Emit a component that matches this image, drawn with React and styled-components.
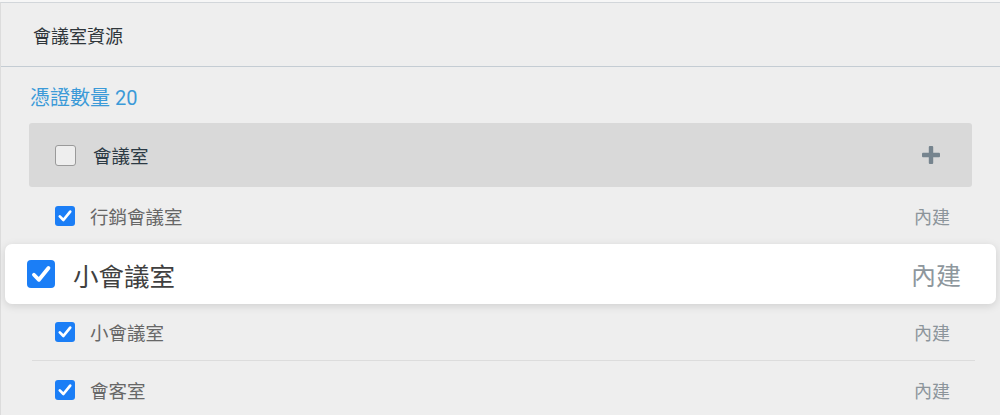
import React from 'react'
import styled, { createGlobalStyle } from 'styled-components'

const GlobalStyle = createGlobalStyle`
  html, body {
    margin: 0;
    padding: 0;
    background: #f6f6f6;
  }
  body {
    font-family: Roboto, "Noto Sans CJK TC", "Noto Sans", sans-serif;
  }
`

const Page = styled.div`
  width: 1000px;
  height: 415px;
  padding-top: 2px;
  box-sizing: border-box;
  overflow: hidden;
`

const Panel = styled.div`
  background: #eeeeee;
  border-top: 1px solid #d2d6da;
  border-left: 1px solid #dcdcdc;
  height: 100%;
`

const Header = styled.div`
  height: 63px;
  display: flex;
  align-items: center;
  padding-left: 32px;
  border-bottom: 1.5px solid #c4ccd3;
  font-size: 18px;
  color: #2f363b;
`

const Body = styled.div`
  padding: 20px 28px 0 28px;
`

const Count = styled.div`
  font-size: 20px;
  line-height: 22px;
  color: #3b9ad8;
  margin-left: 1px;
  margin-bottom: 14px;
`

const Group = styled.div`
  height: 64px;
  display: flex;
  align-items: center;
  gap: 17px;
  padding: 0 32px 0 26px;
  background: #d9d9d9;
  border-radius: 3px;
`

const GroupName = styled.span`
  flex: 1;
  font-size: 18.5px;
  color: #2c3a44;
`

const Box = styled.span`
  flex: 0 0 auto;
  width: ${p => p.size}px;
  height: ${p => p.size}px;
  box-sizing: border-box;
  border-radius: ${p => (p.size > 24 ? 4 : 3)}px;
  display: flex;
  align-items: center;
  justify-content: center;
  background: ${p => (p.checked ? '#1b7ef6' : '#eeeeee')};
  border: ${p => (p.checked ? 'none' : '1.5px solid #9a9a9a')};
`

const List = styled.div`
  position: relative;
  margin: 0 -3px 0 3px;
`

const Row = styled.div`
  height: 57px;
  display: flex;
  align-items: center;
  gap: 15px;
  padding: 0 25px 0 23px;
  border-bottom: 1px solid #dcdcdc;
  visibility: ${p => (p.placeholder ? 'hidden' : 'visible')};
`

const Name = styled.span`
  flex: 1;
  font-size: 18.5px;
  color: #676767;
`

const Tag = styled.span`
  font-size: 18px;
  color: #8c959b;
`

const DragCard = styled.div`
  position: absolute;
  top: 57px;
  left: -27px;
  right: -21px;
  height: 60px;
  display: flex;
  align-items: center;
  gap: 18px;
  padding: 0 35px 0 22px;
  background: #ffffff;
  border-radius: 7px;
  box-shadow: 0 2px 8px rgba(0, 0, 0, 0.13);
`

const DragName = styled.span`
  flex: 1;
  font-size: 25.5px;
  color: #404040;
`

const DragTag = styled.span`
  font-size: 25px;
  color: #8e979d;
`

const Check = ({ size, checked }) => (
  <Box size={size} checked={checked}>
    {checked && (
      <svg width={size * 0.8} height={size * 0.8} viewBox="0 0 20 20">
        <polyline
          points="3.5,10.5 8,15 16.5,4.5"
          fill="none"
          stroke="#fff"
          strokeWidth="3.4"
          strokeLinecap="round"
          strokeLinejoin="round"
        />
      </svg>
    )}
  </Box>
)

const Plus = () => (
  <svg width="18" height="18" viewBox="0 0 18 18">
    <rect x="6.8" y="0" width="4.4" height="18" rx="1" fill="#76848e" />
    <rect x="0" y="6.8" width="18" height="4.4" rx="1" fill="#76848e" />
  </svg>
)

const rooms = [
  { name: '行銷會議室' },
  { name: '小會議室', placeholder: true },
  { name: '小會議室' },
  { name: '會客室' },
]

export default function App() {
  return (
    <Page>
      <GlobalStyle />
      <Panel>
        <Header>會議室資源</Header>
        <Body>
          <Count>憑證數量 20</Count>
          <Group>
            <Check size={21} />
            <GroupName>會議室</GroupName>
            <Plus />
          </Group>
          <List>
            {rooms.map((r, i) => (
              <Row key={i} placeholder={r.placeholder ? 1 : 0}>
                <Check size={20} checked />
                <Name>{r.name}</Name>
                <Tag>內建</Tag>
              </Row>
            ))}
            <DragCard>
              <Check size={28} checked />
              <DragName>小會議室</DragName>
              <DragTag>內建</DragTag>
            </DragCard>
          </List>
        </Body>
      </Panel>
    </Page>
  )
}
